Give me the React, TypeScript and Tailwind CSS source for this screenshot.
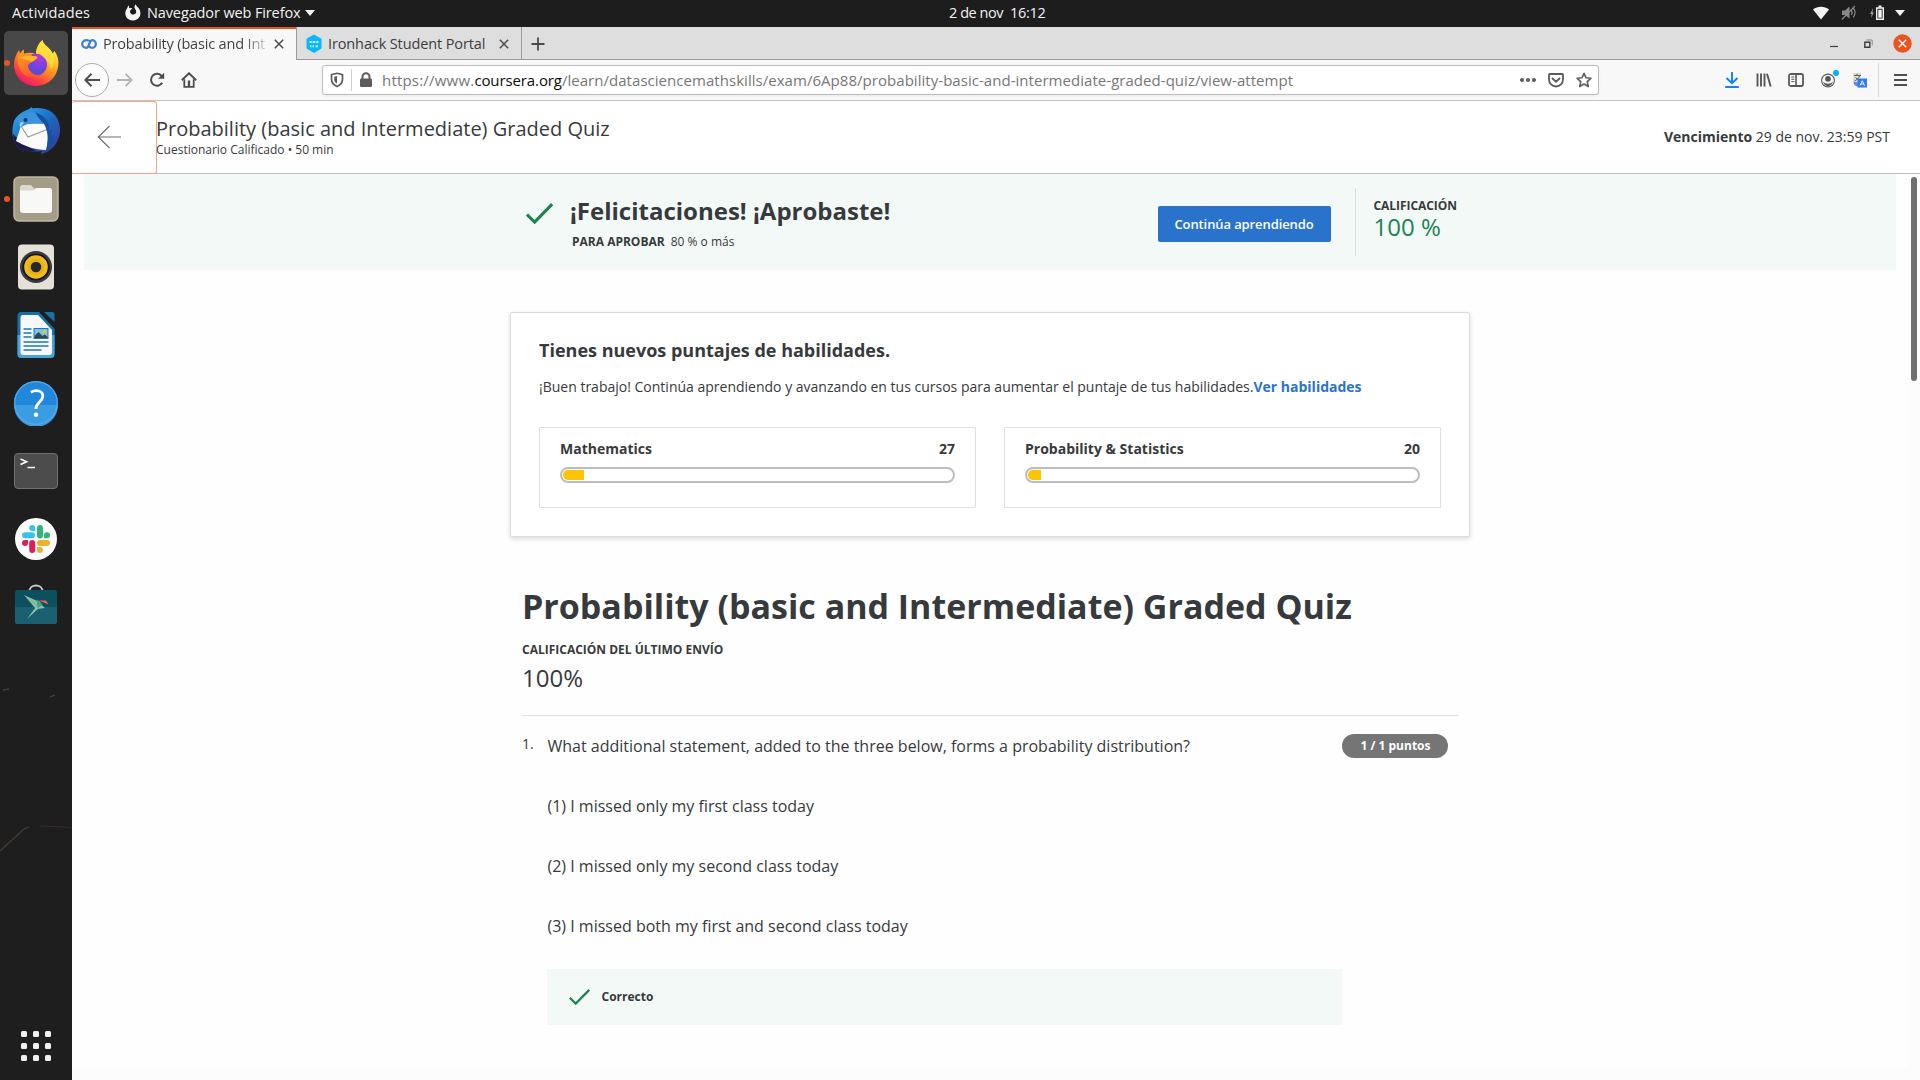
import type { ReactNode } from "react";

function Svg({ w, h, className = "", children }: { w: number; h: number; className?: string; children: ReactNode }) {
  return (
    <svg width={w} height={h} viewBox={`0 0 ${w} ${h}`} fill="none" className={`shrink-0 ${className}`}>
      {children}
    </svg>
  );
}

/* ---------- GNOME top bar ---------- */

function TopBar() {
  return (
    <header className="grid h-[27px] grid-cols-[949px_auto_1fr] items-center bg-[#1d1d1d] pb-px text-[14.5px] leading-[20px] text-[#f2f2f2]">
      <div className="flex items-center pl-3">
        <span className="w-[112px] tracking-[0.12px]">Actividades</span>
        <Svg w={18} h={20}>
          <path
            d="M5.2 2.2C4.6 3.6 4.9 4.6 5.6 5.3 6.6 4.9 7.6 5 8.4 5.6 7.4 6.3 6.6 7 5.9 8.4c.2 2.6 3.6 4.4 5.6 2.2 1.1-1.3.9-3-.2-4.4C10 4.6 10.200 3 11.600 1.200c.5 1.700 1.600 2.500 2.700 3.600 3.800 4 2.700 12-4.900 12.600C3 17.700.6 12.800 1.500 8.600c.3-1.300.9-2.400 1.700-3.300C3.400 4 4.200 2.900 5.200 2.200z"
            fill="#f5f5f5"
          />
        </Svg>
        <span className="ml-[5px] tracking-[-0.12px]">Navegador web Firefox</span>
        <Svg w={10} h={6} className="ml-[5px]">
          <path d="M0 0h10L5 6z" fill="#f2f2f2" />
        </Svg>
      </div>
      <div className="flex gap-[7px]">
        <span className="tracking-[-0.45px]">2 de nov</span>
        <span className="tracking-[-0.35px]">16:12</span>
      </div>
      <div className="flex items-center justify-end pr-[15px]">
        <Svg w={16} h={14}>
          <path d="M0 3.500C4.500-.2 11.500-.2 16 3.500L8 13.500z" fill="#f5f5f5" />
        </Svg>
        <Svg w={16} h={16} className="ml-[12px]">
          <path d="M1 5.500h3L8.500 1.500v12L4 10H1z" fill="#8a8a8a" />
          <path d="M10.200 5.500c1 1.200 1 3.200 0 4.500M12.200 3c2.200 2.600 2.200 6.500 0 9.500M.8 14.500L14 1" stroke="#8a8a8a" strokeWidth="1.200" />
        </Svg>
        <Svg w={15} h={16} className="ml-[13px]">
          <path d="M3.200 3L0 9h1.700L1 13l3-5.500H2.500z" fill="#9a9a9a" />
          <path d="M6.700 3h6.600v11.300H6.700z" stroke="#f5f5f5" strokeWidth="1.400" />
          <path d="M8.300 4.700h3.400v8H8.300zM8.500.5h3v2h-3z" fill="#f5f5f5" />
        </Svg>
        <Svg w={10} h={6} className="ml-[10px]">
          <path d="M0 0h10L5 6z" fill="#f2f2f2" />
        </Svg>
      </div>
    </header>
  );
}

/* ---------- Dock ---------- */

function FirefoxIcon() {
  return (
    <svg width="48" height="48" viewBox="0 0 48 48" fill="none">
      <defs>
        <linearGradient id="ffBody" x1="38" y1="4" x2="12" y2="46" gradientUnits="userSpaceOnUse">
          <stop offset="0" stopColor="#fff34f" />
          <stop offset=".3" stopColor="#ffc22c" />
          <stop offset=".55" stopColor="#ff8324" />
          <stop offset=".8" stopColor="#ff3a46" />
          <stop offset="1" stopColor="#e5157a" />
        </linearGradient>
        <linearGradient id="ffHead" x1="6" y1="10" x2="22" y2="34" gradientUnits="userSpaceOnUse">
          <stop offset="0" stopColor="#ffa91c" />
          <stop offset="1" stopColor="#ff5a2c" />
        </linearGradient>
        <radialGradient id="ffGlobe" cx="27" cy="19" r="14" gradientUnits="userSpaceOnUse">
          <stop offset="0" stopColor="#b833e1" />
          <stop offset=".5" stopColor="#8340ea" />
          <stop offset="1" stopColor="#5a4bd0" />
        </radialGradient>
      </defs>
      <path d="M30.500 1C31 5 35 7 38 10.500 39.500 12 40 13 40.500 14.500L42.500 12C45.500 16 47 21 46.300 26.500 45 38.500 35.500 47 24 47 11.500 47 2 37.500 2 25.500 2 20 4 15 7 11L8 14.500 11.500 10.500 12 15C16 13 20 14 24 15 24 9 27 4 30.500 1z" fill="url(#ffBody)" />
      <circle cx="24" cy="25.500" r="11" fill="url(#ffGlobe)" />
      <path d="M11.500 10.500L12.300 15c4-1.500 6.500-.5 8.200 2.500h5c.8 1.800-2.500 4-5.500 5.500-4 2-4.500 3.500-3.500 6 1.500 4.500 6 7.500 10.500 6.800-5 4.500-15 2.700-19-5.300C5 24 5 17 8 14.500z" fill="url(#ffHead)" />
      <path d="M8.500 19c4-2.500 9-3 16.500-1.500.5 2-2.500 4-5.500 5.500C17 21 13 21 8.500 19z" fill="#ffb62a" />
      <path d="M30.500 1C31 5 35 7 38 10.500c5 6 5 14 1 20-1-6-3.500-8.500-6.500-11.500C29 15.500 25.500 14 24 15c0-6 3-11 6.500-14z" fill="#ffe03c" opacity=".75" />
    </svg>
  );
}

function ThunderbirdIcon() {
  return (
    <svg width="50" height="50" viewBox="0 0 50 50" fill="none">
      <defs>
        <linearGradient id="tbBody" x1="10" y1="4" x2="44" y2="46" gradientUnits="userSpaceOnUse">
          <stop offset="0" stopColor="#2f9fe6" />
          <stop offset=".5" stopColor="#1c66bd" />
          <stop offset="1" stopColor="#3a3aa0" />
        </linearGradient>
      </defs>
      <path d="M3 15C1 22 .5 30 4 37c2 4 5 7 9 9l-2-4c5 3 12 5 20 3l-1 3c10-2 18-11 19-22 .5-9-3-17-10-21C33 2 27 1.500 22 2.500L20 1l-1.500 2C12 5 6 9 3 15z" fill="url(#tbBody)" />
      <path d="M2 28c0 8 4 14 11 18l-2-4c4 2.500 10 4 15 3.500L12 38z" fill="#201746" />
      <path d="M5 35L10 20l6-2 20-1c2 9 1 19-1 27-10 0-22-4-30-9z" fill="#fbfbfb" />
      <path d="M10 20l7 11 19-7.500" stroke="#9b9b9b" strokeWidth="1.100" />
      <path d="M6 14C10 7 20 4 25 8c3 2.500 4 6 8 10l-14-1-9 4c-2-1-3-4-4-7z" fill="#3b93dd" />
      <path d="M10 16l3 .5-3.500 5c-1.500-1-1-4 .5-5.500z" fill="#9fcdf0" />
      <circle cx="14.500" cy="14" r="2" fill="#12335c" />
      <path d="M25 7c9 2 14 10 13 19l3-3-1 8 4-4-3 8 3-2c-2 5-5 9-9 12 3-9 2-21-2-27-3-4-7-7-8-11z" fill="#1450a0" />
    </svg>
  );
}

function FilesIcon() {
  return (
    <svg width="46" height="46" viewBox="0 0 46 46" fill="none">
      <rect x="1" y="1" width="44" height="44" rx="5" fill="#a39c86" stroke="#bdb7a5" strokeWidth="1.500" />
      <path d="M7 11.500Q7 9 9.500 9H18l3 3.500h15q3 0 3 3V22H7z" fill="#dcd8cb" />
      <path d="M7 14.500h13.500l3-2.500H36.500Q39 12 39 14.500V34q0 3-3 3H10q-3 0-3-3z" fill="#f8f8f7" />
    </svg>
  );
}

function RhythmboxIcon() {
  return (
    <svg width="46" height="46" viewBox="0 0 46 46" fill="none">
      <rect x="5" y=".5" width="36" height="45" rx="4" fill="#e6e1d8" />
      <circle cx="23" cy="23" r="16" fill="#3a3b45" />
      <circle cx="23" cy="23" r="13.500" fill="#14151b" />
      <circle cx="23" cy="23" r="11.800" fill="#f1bd1d" />
      <circle cx="23" cy="23" r="8.500" fill="#e8b216" />
      <circle cx="23" cy="23" r="5.300" fill="#26272b" />
    </svg>
  );
}

function WriterIcon() {
  return (
    <svg width="46" height="46" viewBox="0 0 46 46" fill="none">
      <path d="M8.500 0H26l15.500 17v25q0 4-4 4h-29q-4 0-4-4V4q0-4 4-4z" fill="#1672a6" />
      <path d="M4.500 23h37v19q0 4-4 4h-29q-4 0-4-4z" fill="#48a5d6" />
      <path d="M31 0h8q2.500 0 2.500 2.500v7.500z" fill="#1672a6" />
      <path d="M10 3h15L39 18v22q0 3-3 3H10.500q-3 0-3-3V6q0-3 2.500-3z" fill="#f8f8f8" />
      <path d="M10.500 17h8M10.500 21h8M10.500 25h8M10.500 30h25M10.500 34h25M10.500 38h18" stroke="#1f77ad" strokeWidth="1.700" />
      <rect x="21" y="16.500" width="14" height="10" fill="#7cc3e8" stroke="#1f77ad" />
      <path d="M21.500 26v-2l4-4 4 4 2-1.500 3 2V26z" fill="#34474f" />
      <circle cx="31.500" cy="19.500" r="1.700" fill="#f0c419" />
    </svg>
  );
}

function HelpIcon() {
  return (
    <svg width="46" height="46" viewBox="0 0 46 46" fill="none">
      <circle cx="23" cy="23" r="22" fill="#2187da" />
      <path d="M1 25a22 22 0 0 0 44 0z" fill="#3c9ce2" />
      <circle cx="23" cy="23" r="21.300" stroke="#55aae8" strokeWidth="1.200" />
      <path d="M17.800 12.200c5.500-3 12.200-1.500 12 4.100-.2 5.500-6.900 6.200-6.900 12.700" stroke="#fff" strokeWidth="2.800" />
      <circle cx="23" cy="34.700" r="2.200" fill="#fff" />
    </svg>
  );
}

function TerminalIcon() {
  return (
    <svg width="46" height="46" viewBox="0 0 46 46" fill="none">
      <rect x="1.500" y="5.500" width="43" height="35" rx="3.500" fill="#4c4c4c" stroke="#717171" />
      <path d="M7.500 11l6 2.800-6 2.800" stroke="#fff" strokeWidth="1.700" />
      <path d="M14.500 19.500h7.500" stroke="#fff" strokeWidth="1.500" />
    </svg>
  );
}

function SlackIcon() {
  return (
    <svg width="44" height="44" viewBox="0 0 44 44" fill="none">
      <circle cx="22" cy="22" r="21" fill="#fff" />
      <g strokeWidth="6" strokeLinecap="round">
        <path d="M11 18.200h7" stroke="#36c5f0" />
        <path d="M26 11v7.500" stroke="#2eb67d" />
        <path d="M26 26h7" stroke="#ecb22e" />
        <path d="M18.200 26v7" stroke="#e01e5a" />
      </g>
      <path d="M21.200 14v-3a3 3 0 1 0-3 3z" fill="#36c5f0" />
      <path d="M30 21.200h3a3 3 0 1 0-3-3z" fill="#2eb67d" />
      <path d="M23 30v3a3 3 0 1 0 3-3z" fill="#ecb22e" />
      <path d="M14 23h-3a3 3 0 1 0 3 3z" fill="#e01e5a" />
    </svg>
  );
}

function SnapStoreIcon() {
  return (
    <svg width="46" height="46" viewBox="0 3 46 46" fill="none">
      <path d="M16.500 11.500v-1c0-8 13-8 13 0v1" stroke="#c9ccd0" strokeWidth="1.800" />
      <rect x="2" y="9" width="42" height="34" rx="2.500" fill="#0c4f5e" />
      <path d="M2 26h42v14.500q0 2.500-2.500 2.500h-37Q2 43 2 40.500z" fill="#1b6071" />
      <path d="M11 14l14.500 6.500L32 27l-7 1L14 38l8-11z" fill="#82bfa1" />
      <path d="M23.500 19l1 8 5-3-2.500-4z" fill="#4f9b87" />
      <path d="M26 19.500h7l2.500 4z" fill="#f9623f" />
    </svg>
  );
}

function DockItem({ active = false, running = false, children }: { active?: boolean; running?: boolean; children: ReactNode }) {
  return (
    <div className={`relative flex h-16 w-16 items-center justify-center rounded-[5px] ${active ? "bg-[#484848]" : ""}`}>
      {running && <span className="absolute top-[29px] left-0 h-1.5 w-1.5 rounded-full bg-[#e95420]" />}
      {children}
    </div>
  );
}

function Dock() {
  return (
    <aside className="relative flex w-[72px] shrink-0 flex-col items-center gap-1 bg-[#1e1e1e] pt-1 pb-[19px]">
      <svg className="absolute top-[630px] left-0" width="72" height="250" viewBox="0 0 72 250" fill="none">
        <path d="M3 33l6-1M50 40l5-2" stroke="#4a3a38" strokeWidth="1.500" />
        <path d="M0 194L24 172l5-2" stroke="#4a3a33" strokeWidth="1.300" />
        <path d="M40 169l24 1 8 1" stroke="#3c2c28" />
      </svg>
      <DockItem active running><FirefoxIcon /></DockItem>
      <DockItem><ThunderbirdIcon /></DockItem>
      <DockItem running><FilesIcon /></DockItem>
      <DockItem><RhythmboxIcon /></DockItem>
      <DockItem><WriterIcon /></DockItem>
      <DockItem><HelpIcon /></DockItem>
      <DockItem><TerminalIcon /></DockItem>
      <DockItem><SlackIcon /></DockItem>
      <DockItem><SnapStoreIcon /></DockItem>
      <div className="mt-auto grid grid-cols-3 gap-1.5">
        {Array.from({ length: 9 }, (_, i) => (
          <span key={i} className="h-1.5 w-1.5 rounded-[1.5px] bg-[#f2f1f0]" />
        ))}
      </div>
    </aside>
  );
}

/* ---------- Firefox chrome ---------- */

function CloseX() {
  return (
    <Svg w={10} h={10}>
      <path d="M.8.8l8.400 8.400M9.200.8L.8 9.200" stroke="#4a4a4a" strokeWidth="1.500" />
    </Svg>
  );
}

function TabStrip() {
  return (
    <div className="flex h-[33px] bg-[#dedede] text-[14.5px] leading-[20px] text-[#3d3d3d]">
      <div className="flex w-[224px] items-center border-t-2 border-[#e95420] bg-[#f8f8f8] pb-[2px] pl-[9px]">
        <Svg w={16} h={10}>
          <path
            d="M9.800 3.200C8.800 1.700 7.400 1.200 5.700 1.200 3 1.200 1.200 3 1.200 5S3 8.800 5.300 8.800C8.500 8.800 8 1.200 11.200 1.200c2 0 3.600 1.700 3.600 3.800s-1.600 3.800-3.600 3.800c-1.200 0-2.200-.4-2.900-1.300"
            stroke="#3f80c8"
            strokeWidth="2.300"
          />
        </Svg>
        <span className="ml-[6px] w-[165px] bg-linear-to-r from-[#3d3d3d] from-85% to-[#3d3d3d]/10 bg-clip-text tracking-[-0.17px] whitespace-nowrap text-transparent">
          Probability (basic and Int
        </span>
        <span className="ml-[6px] flex"><CloseX /></span>
      </div>
      <div className="flex w-[226px] items-center border-x border-b border-[#9a9a9a] pt-[2px] pl-[9px]">
        <Svg w={16} h={20}>
          <path d="M8 .5l7.500 4.200v9.800L8 19 .5 14.500V4.700z" fill="#09b8f4" />
          <path d="M3.500 8h2.300M6.600 8h2.800M10.200 8h2.300M4 12.200h1.500M6.500 12.200h1.500M9.500 12.200H12" stroke="#fff" strokeWidth="2" opacity=".75" />
        </Svg>
        <span className="ml-[6px] w-[171px] tracking-[-0.12px] whitespace-nowrap">Ironhack Student Portal</span>
        <CloseX />
      </div>
      <div className="flex flex-1 items-center border-b border-[#9a9a9a] pt-px pr-[8px] pl-[9px]">
        <Svg w={14} h={14}>
          <path d="M7 .5v13M.5 7h13" stroke="#4a4a4a" strokeWidth="1.800" />
        </Svg>
        <div className="ml-auto flex items-center">
          <Svg w={8} h={8}>
            <path d="M0 6.500h8" stroke="#3d3d3d" strokeWidth="1.200" />
          </Svg>
          <Svg w={9} h={9} className="ml-[26px]">
            <path d="M2.500 1h5.700v5.500" stroke="#8a8a8a" />
            <path d="M.8 3.200h5v5h-5z" stroke="#3d3d3d" strokeWidth="1.400" />
          </Svg>
          <Svg w={19} h={19} className="ml-[20px]">
            <circle cx="9.500" cy="9.500" r="9.200" fill="#e95420" />
            <path d="M5.800 5.800l7.400 7.400M13.200 5.800l-7.400 7.400" stroke="#fff" strokeWidth="1.400" />
          </Svg>
        </div>
      </div>
    </div>
  );
}

function NavBar() {
  return (
    <div className="flex h-[41px] items-center border-b border-[#c4c4c4] bg-[#f8f8f8] pl-[3px]">
      <span className="flex h-[34px] w-[34px] items-center justify-center rounded-full border border-[#acacac] bg-[#fdfdfd]">
        <Svg w={16} h={14}>
          <path d="M16 7H1.500M7.500.8L1.300 7l6.200 6.200" stroke="#4d4d4d" strokeWidth="2" />
        </Svg>
      </span>
      <Svg w={16} h={14} className="ml-[8px]">
        <path d="M0 7h14.500M8.500.8L14.700 7l-6.200 6.200" stroke="#b4b4b4" strokeWidth="1.800" />
      </Svg>
      <Svg w={16} h={16} className="ml-[16px]">
        <path d="M13.200 10.800A6 6 0 1 1 12.700 4" stroke="#4d4d4d" strokeWidth="2" />
        <path d="M15.200.8v6H9z" fill="#4d4d4d" />
      </Svg>
      <Svg w={16} h={16} className="ml-[16px]">
        <path d="M.8 8.300L8 1.200l7.200 7.100" stroke="#4d4d4d" strokeWidth="1.900" />
        <path d="M3.300 7.300v7.500h9.400V7.300" stroke="#4d4d4d" strokeWidth="1.800" />
        <path d="M6.800 8.500h2.400v6H6.800z" fill="#4d4d4d" />
      </Svg>
      <div className="ml-[125px] flex h-[30px] w-[1277px] items-center rounded-[3px] border border-[#bdbdbd] bg-white shadow-[0_1px_3px_rgba(0,0,0,0.06)]">
        <Svg w={14} h={16} className="ml-[7px]">
          <path d="M7 1.300L12.500 2.700v4.500c0 3.300-2 5.800-5.500 7.300-3.500-1.500-5.500-4-5.500-7.300V2.700z" stroke="#5c5c5c" strokeWidth="1.700" />
          <path d="M7 4v7.800c-1.800-1-2.800-2.600-2.800-4.700V4.700z" fill="#5c5c5c" />
        </Svg>
        <span className="ml-[7px] h-[22px] w-px bg-[#cfcfcf]" />
        <Svg w={14} h={16} className="ml-[7px]">
          <path d="M3.500 7.500V4.700a3.500 3.500 0 0 1 7 0v2.800" stroke="#5c5c5c" strokeWidth="2" />
          <rect x="1" y="6.500" width="12" height="8.500" rx="1.200" fill="#5c5c5c" />
        </Svg>
        <span className="ml-[9px] flex-1 text-[15px] leading-[20px] whitespace-nowrap text-[#777]">
          <span className="tracking-[0.2px]">https://www.</span>
          <span className="tracking-[-0.11px] text-[#0c0c0d]">coursera.org</span>
          <span className="tracking-[0.04px]">/learn/datasciencemathskills/exam/6Ap88/probability-basic-and-intermediate-graded-quiz/view-attempt</span>
        </span>
        <Svg w={16} h={4}>
          <path d="M2 0a2 2 0 1 1 0 4 2 2 0 0 1 0-4zm6 0a2 2 0 1 1 0 4 2 2 0 0 1 0-4zm6 0a2 2 0 1 1 0 4 2 2 0 0 1 0-4z" fill="#5c5c5c" />
        </Svg>
        <Svg w={16} h={15} className="ml-[12px]">
          <path d="M1 1.800Q1 1 1.800 1h12.400q.8 0 .8.800V6.500a7 7 0 0 1-14 0z" stroke="#5c5c5c" strokeWidth="1.800" />
          <path d="M4.500 5.500L8 8.800l3.500-3.300" stroke="#5c5c5c" strokeWidth="1.900" strokeLinecap="round" />
        </Svg>
        <Svg w={16} h={16} className="mr-[6px] ml-[12px]">
          <path d="M8 1.300l2 4.500 4.900.5-3.700 3.300 1.100 4.900L8 12l-4.300 2.500 1.100-4.900L1.100 6.300 6 5.800z" stroke="#5c5c5c" strokeWidth="1.600" strokeLinejoin="round" />
        </Svg>
      </div>
      <Svg w={14} h={16} className="ml-[126px]">
        <path d="M7 0v11M1.500 6L7 11.300 12.500 6" stroke="#0a84ff" strokeWidth="1.900" />
        <path d="M1 15h12" stroke="#0a84ff" strokeWidth="2" strokeLinecap="round" />
      </Svg>
      <Svg w={16} h={14} className="ml-[17px]">
        <path d="M1.500.5v13M5 .5v13M8.500.5v13M11 .8l3.700 12.700" stroke="#585858" strokeWidth="1.900" />
      </Svg>
      <Svg w={16} h={14} className="ml-[16px]">
        <rect x="1" y="1" width="14" height="12" rx="1.800" stroke="#585858" strokeWidth="1.800" />
        <path d="M8 1v12" stroke="#585858" strokeWidth="1.600" />
        <path d="M3.300 4h3M3.300 6.300h3M3.300 8.600h3" stroke="#585858" />
      </Svg>
      <div className="relative ml-[17px] flex">
        <Svg w={14} h={15}>
          <circle cx="7" cy="7.500" r="6.400" stroke="#585858" strokeWidth="1.100" />
          <circle cx="7" cy="5.800" r="2.900" fill="#585858" />
          <path d="M2.500 8.500c1 3 8 3 9 0 .5 2-1.500 4.500-4.500 4.500S2 10.500 2.500 8.500z" fill="#585858" />
        </Svg>
        <span className="absolute -top-[3px] -right-[4px] h-1.5 w-1.5 rounded-full bg-[#00b3f4]" />
      </div>
      <Svg w={14} h={15} className="ml-[18px]">
        <rect width="8" height="9" fill="#e2dccb" />
        <path d="M1 2.500h7M4 .8v1.700M6.500 3C5.500 5.500 3.500 7 1.500 8M2.500 4.500l4 3.500" stroke="#555" strokeWidth=".9" />
        <path d="M.5 9h5v4.500C2.500 13.500.5 12 .5 9z" fill="#5b8def" />
        <rect x="4.500" y="5.500" width="9.500" height="9" fill="#2f7af5" />
        <path d="M7 12.700l2.300-5 2.300 5M7.800 11h3" stroke="#fff" strokeWidth=".9" />
      </Svg>
      <span className="ml-[11px] h-[34px] w-px bg-[#d4d4d4]" />
      <Svg w={13} h={12} className="ml-[15px]">
        <path d="M0 1h13M0 6h13M0 11h13" stroke="#4d4d4d" strokeWidth="1.900" />
      </Svg>
    </div>
  );
}

/* ---------- Coursera page ---------- */

function Check({ w, h, stroke }: { w: number; h: number; stroke: number }) {
  return (
    <svg width={w} height={h} viewBox="0 0 26 20" fill="none" className="shrink-0">
      <path d="M.9 11L8.300 18.300 25.200 1" stroke="#1d8354" strokeWidth={stroke} />
    </svg>
  );
}

function PageHeader() {
  return (
    <div className="flex h-[73px] border-b border-[#bdbdbd] bg-white">
      <div className="-mb-px h-[73px] w-[85px] rounded-[3px] border border-l-0 border-[#f3a78d] pt-[23px] pl-[25px]">
        <Svg w={24} h={24}>
          <path d="M24 12H1.500M12.500 1L1.300 12l11.200 11" stroke="#6e6e6e" strokeWidth="1.200" />
        </Svg>
      </div>
      <div className="flex-1 pt-[15px]">
        <h2 className="-ml-px text-[20px] leading-[25px]">Probability (basic and Intermediate) Graded Quiz</h2>
        <p className="-ml-px text-[12px] leading-[17px]">Cuestionario Calificado • 50 min</p>
      </div>
      <p className="mt-[26px] mr-[30px] text-[14px] leading-[19px]">
        <b>Vencimiento</b> 29 de nov. 23:59 PST
      </p>
    </div>
  );
}

function ResultBanner() {
  return (
    <section className="mr-[24px] ml-[12px] h-[96px] bg-[#f3f9f7]">
      <div className="ml-[442px] flex w-[931px] items-start">
        <div className="pt-[29px]"><Check w={27} h={21} stroke={3} /></div>
        <div className="ml-[17px] pt-[20px]">
          <h2 className="text-[24px] leading-[33px] font-bold">¡Felicitaciones! ¡Aprobaste!</h2>
          <p className="mt-[6px] ml-[2px] text-[12px] leading-[17px]">
            <b className="mr-[6px]">PARA APROBAR</b>80 % o más
          </p>
        </div>
        <button className="mt-[32px] ml-auto h-9 w-[173px] rounded-[2px] bg-[#2a73cc] text-[13px] leading-[18px] font-semibold tracking-[-0.1px] text-white">
          Continúa aprendiendo
        </button>
        <div className="mt-[14px] ml-[24px] h-[68px] border-l border-[#dcdfde] pt-[9px] pl-[18px]">
          <p className="text-[12px] leading-[17px] font-bold tracking-[-0.05px]">CALIFICACIÓN</p>
          <p className="text-[24px] leading-[25px] text-[#1d8354]">100 %</p>
        </div>
      </div>
    </section>
  );
}

function SkillBox({ name, score, fill }: { name: string; score: number; fill: string }) {
  return (
    <div className="h-[81px] flex-1 rounded-[1px] border border-[#dfdfdf] px-5 pt-[11px]">
      <div className="flex justify-between text-[14px] leading-[19px] font-bold">
        <span>{name}</span>
        <span>{score}</span>
      </div>
      <div className="mt-[9px] h-4 overflow-hidden rounded-full border-2 border-[#bdbdbd] p-px">
        <div className={`h-2.5 rounded-l-full bg-[#ffc400] ${fill}`} />
      </div>
    </div>
  );
}

function SkillsCard() {
  return (
    <section className="mt-[42px] ml-[438px] h-[225px] w-[960px] rounded-[2px] border border-[#dcdcdc] bg-white px-[28px] pt-[25px] shadow-[0_2px_5px_rgba(0,0,0,0.14)]">
      <h3 className="text-[18px] leading-[24px] font-bold">Tienes nuevos puntajes de habilidades.</h3>
      <p className="mt-[15px] text-[14px] leading-[19px] whitespace-nowrap">
        ¡Buen trabajo! Continúa aprendiendo y avanzando en tus cursos para aumentar el puntaje de tus habilidades.
        <b className="text-[#2a73cc]">Ver habilidades</b>
      </p>
      <div className="mt-[31px] flex gap-7">
        <SkillBox name="Mathematics" score={27} fill="w-[21px]" />
        <SkillBox name="Probability & Statistics" score={20} fill="w-[13px]" />
      </div>
    </section>
  );
}

function Quiz() {
  return (
    <section className="mt-[46px] ml-[450px] w-[936px]">
      <h1 className="text-[34px] leading-[46px] font-bold whitespace-nowrap">Probability (basic and Intermediate) Graded Quiz</h1>
      <p className="mt-[12px] text-[12px] leading-[17px] font-bold">CALIFICACIÓN DEL ÚLTIMO ENVÍO</p>
      <p className="mt-[3px] text-[24px] leading-[33px]">100%</p>
      <div className="mt-[21px] flex border-t border-[#e1e1e1] pt-[18px]">
        <span className="w-[25px] text-[14px] leading-[19px]">1.</span>
        <div className="w-[795px]">
          <div className="mt-px space-y-[38px] pl-[0.5px] text-[16px] leading-[22px]">
            <p>What additional statement, added to the three below, forms a probability distribution?</p>
            <p>(1) I missed only my first class today</p>
            <p>(2) I missed only my second class today</p>
            <p>(3) I missed both my first and second class today</p>
          </div>
          <div className="mt-[32px] flex h-14 items-center bg-[#f3f9f7] pl-[21.5px]">
            <Check w={21} h={16} stroke={2.8} />
            <span className="-mt-px ml-[12px] text-[12px] leading-[17px] font-bold">Correcto</span>
          </div>
        </div>
        <span className="flex h-6 w-[106px] justify-center rounded-full bg-[#757575] pt-[3px] pl-px text-[12px] leading-[17px] font-bold text-white">
          1 / 1 puntos
        </span>
      </div>
    </section>
  );
}

export default function App() {
  return (
    <div className="flex h-[1080px] w-[1920px] flex-col overflow-hidden bg-white font-['Open_Sans',sans-serif]">
      <TopBar />
      <div className="flex flex-1">
        <Dock />
        <main className="flex flex-1 flex-col">
          <TabStrip />
          <NavBar />
          <div className="flex flex-1 flex-col text-[#373a3c]">
            <PageHeader />
            <div className="relative flex-1 bg-[#fefefe]">
              <ResultBanner />
              <SkillsCard />
              <Quiz />
              <span className="absolute right-0 bottom-0 left-0 h-3 bg-[#fcfcfc]" />
              <div className="absolute top-0 right-0 bottom-0 w-3 bg-[#fcfcfc] pt-[3px] pl-[3px]">
                <div className="h-[204px] w-[6px] rounded-full bg-[#6f6f6f]" />
              </div>
            </div>
          </div>
        </main>
      </div>
    </div>
  );
}
